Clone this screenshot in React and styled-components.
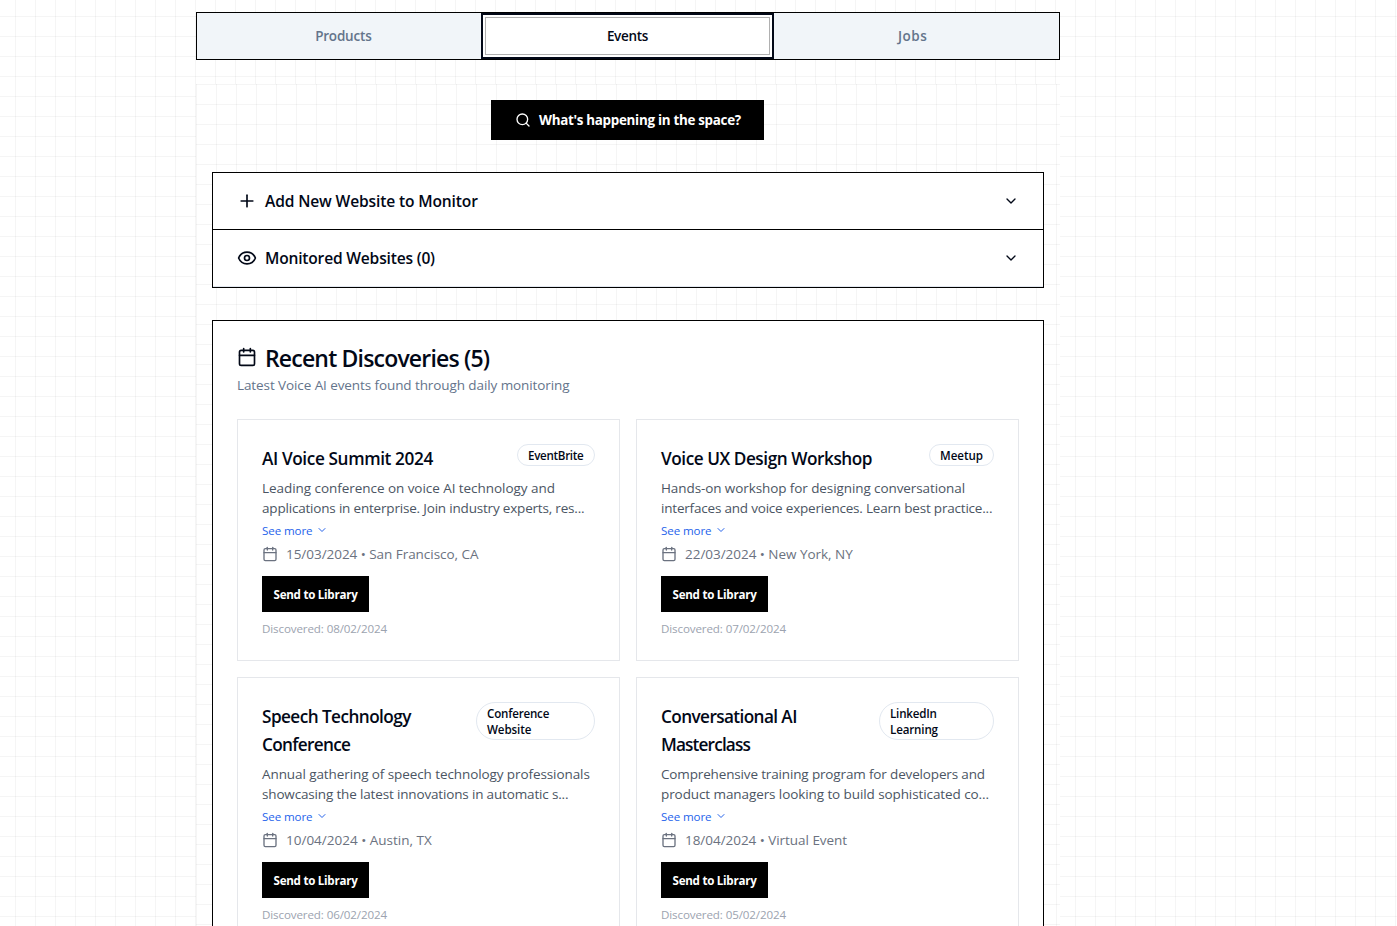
import React from 'react';
import styled, { createGlobalStyle, css } from 'styled-components';
import { Search, Plus, Eye, Calendar, ChevronDown } from 'lucide-react';

const gridLines = css`
  background-color: #fff;
  background-image:
    linear-gradient(rgba(0, 0, 0, 0.04) 1px, transparent 1px),
    linear-gradient(90deg, rgba(0, 0, 0, 0.04) 1px, transparent 1px);
  background-size: 20px 20px;
`;

const GlobalStyle = createGlobalStyle`
  *, *::before, *::after { box-sizing: border-box; }
  body {
    margin: 0;
    height: 926px;
    overflow: hidden;
    color: #020817;
    font-family: "Open Sans", "Noto Sans", sans-serif;
  }
  button { font-family: inherit; color: inherit; background: none; border: 0; padding: 0; margin: 0; }
  h2, h3, p { margin: 0; }
  svg { flex: none; display: block; }
`;

const Page = styled.div`
  ${gridLines}
  background-position: -5px -4px;
  height: 926px;
  overflow: hidden;
  padding: 12px 0 0 196px;
`;

const Main = styled.main`
  width: 864px;
`;

const TabList = styled.div`
  display: grid;
  grid-template-columns: repeat(3, 1fr);
  height: 48px;
  padding: 4px;
  border: 1px solid #000;
  background: #f1f5f9;
`;

const Tab = styled.button`
  height: 38px;
  border: 1px solid transparent;
  font-size: 13.5px;
  font-weight: 600;
  line-height: 20px;
  color: #64748b;
  ${(p) =>
    p.$active &&
    css`
      margin-left: -1px;
      color: #020817;
      background: #fff;
      border-color: #b0b0b0;
      box-shadow: 0 0 0 2px #fff, 0 0 0 4px #020817;
    `}
`;

const Spaced = styled.span`
  letter-spacing: ${(p) => p.$ls || 0}px;
  padding-top: ${(p) => p.$pt || 0}px;
  white-space: nowrap;
`;

const Panel = styled.section`
  ${gridLines}
  margin-top: 24px;
  padding: 16px 16px 0;
  height: 900px;
`;

const SearchButton = styled.button`
  display: flex;
  align-items: center;
  gap: 8px;
  width: 273px;
  height: 40px;
  margin: 0 0 32px 279px;
  padding: 0 24px;
  background: #000;
  color: #fff;
  font-size: 13.4px;
  font-weight: 700;
  line-height: 20px;
`;

const Accordion = styled.div`
  border: 1px solid #000;
  background: #fff;
  margin-bottom: 32px;
`;

const AccordionRow = styled.button`
  display: flex;
  align-items: center;
  gap: 8px;
  width: 100%;
  height: 57px;
  padding: 0 24px;
  border-bottom: 1px solid ${(p) => (p.$last ? '#e2e8f0' : '#000')};
  font-size: 15.6px;
  font-weight: 600;
  line-height: 24px;
  text-align: left;

  & > svg:last-child { margin-left: auto; }
`;

const Discoveries = styled.section`
  border: 1px solid #000;
  background: #fff;
  padding: 24px 24px 0;
  height: 800px;
`;

const Heading = styled.h2`
  display: flex;
  align-items: center;
  gap: 8px;
  height: 24px;
  font-size: 23px;
  font-weight: 600;
  line-height: 24px;
`;

const Subtitle = styled.p`
  margin: 6px 0 24px;
  font-size: 13.5px;
  line-height: 20px;
  color: #64748b;
`;

const CardGrid = styled.div`
  display: grid;
  grid-template-columns: 1fr 1fr;
  gap: 16px;
`;

const Card = styled.article`
  display: flex;
  flex-direction: column;
  align-items: flex-start;
  padding: 24px 24px 23px;
  border: 1px solid #e5e7eb;
  background: #fff;
`;

const CardHeader = styled.header`
  display: flex;
  justify-content: space-between;
  align-items: flex-start;
  width: 100%;
  margin-bottom: 5px;
`;

const CardTitle = styled.h3`
  display: flex;
  flex-direction: column;
  padding-top: 1px;
  font-size: 17.2px;
  font-weight: 600;
  line-height: 28px;
`;

const Badge = styled.span`
  display: flex;
  flex-direction: column;
  width: ${(p) => p.$width}px;
  padding: 3px 10px 1px;
  border: 1px solid #e2e8f0;
  border-radius: 999px;
  font-size: 11.6px;
  font-weight: 600;
  line-height: 16px;
`;

const Description = styled.p`
  display: flex;
  flex-direction: column;
  font-size: 13.5px;
  line-height: 20px;
  color: #4b5563;
`;

const SeeMore = styled.button`
  display: flex;
  align-items: center;
  gap: 4px;
  height: 16px;
  margin-top: 4px;
  font-size: 11.6px;
  line-height: 16px;
  color: #2563eb;
`;

const Meta = styled.div`
  display: flex;
  align-items: center;
  gap: 8px;
  margin-top: 6px;
  font-size: 13.5px;
  line-height: 20px;
  color: #6b7280;
`;

const SendButton = styled.button`
  width: 107px;
  height: 36px;
  margin-top: 12px;
  padding-top: 2px;
  background: #000;
  color: #fff;
  font-size: 11.6px;
  font-weight: 700;
  line-height: 16px;
`;

const Discovered = styled.p`
  margin-top: 9px;
  font-size: 11.6px;
  line-height: 16px;
  color: #9ca3af;
`;

const events = [
  {
    title: [['AI Voice Summit 2024', -0.38]],
    badge: [['EventBrite', -0.3]],
    badgeWidth: 78,
    text: [
      ['Leading conference on voice AI technology and', -0.05],
      ['applications in enterprise. Join industry experts, res...', -0.19],
    ],
    meta: ['15/03/2024 • San Francisco, CA', -0.04],
    found: '08/02/2024',
  },
  {
    title: [['Voice UX Design Workshop', -0.45]],
    badge: [['Meetup', -0.05]],
    badgeWidth: 65,
    text: [
      ['Hands-on workshop for designing conversational', -0.09],
      ['interfaces and voice experiences. Learn best practice...', -0.2],
    ],
    meta: ['22/03/2024 • New York, NY', -0.03],
    found: '07/02/2024',
  },
  {
    title: [['Speech Technology', -0.56], ['Conference', -0.68]],
    badge: [['Conference', -0.2], ['Website', -0.1]],
    badgeWidth: 119,
    text: [
      ['Annual gathering of speech technology professionals', -0.09],
      ['showcasing the latest innovations in automatic s...', -0.16],
    ],
    meta: ['10/04/2024 • Austin, TX', 0],
    found: '06/02/2024',
  },
  {
    title: [['Conversational AI', -0.6], ['Masterclass', -0.85]],
    badge: [['LinkedIn', -0.2], ['Learning', -0.15]],
    badgeWidth: 115,
    text: [
      ['Comprehensive training program for developers and', -0.15],
      ['product managers looking to build sophisticated co...', -0.09],
    ],
    meta: ['18/04/2024 • Virtual Event', -0.04],
    found: '05/02/2024',
  },
];

const Lines = ({ items }) =>
  items.map(([text, ls]) => (
    <Spaced key={text} $ls={ls}>
      {text}
    </Spaced>
  ));

const EventCard = ({ event }) => (
  <Card>
    <CardHeader>
      <CardTitle>
        <Lines items={event.title} />
      </CardTitle>
      <Badge $width={event.badgeWidth}>
        <Lines items={event.badge} />
      </Badge>
    </CardHeader>
    <Description>
      <Lines items={event.text} />
    </Description>
    <SeeMore>
      <Spaced $ls={-0.12} $pt={2}>See more</Spaced>
      <ChevronDown size={12} />
    </SeeMore>
    <Meta>
      <Calendar size={16} />
      <Lines items={[event.meta]} />
    </Meta>
    <SendButton>
      <Spaced $ls={-0.27}>Send to Library</Spaced>
    </SendButton>
    <Discovered>
      <Spaced $ls={-0.12}>Discovered: {event.found}</Spaced>
    </Discovered>
  </Card>
);

export default function App() {
  return (
    <>
      <GlobalStyle />
      <Page>
        <Main>
          <TabList role="tablist">
            <Tab role="tab">
              <Spaced $ls={-0.2}>Products</Spaced>
            </Tab>
            <Tab role="tab" $active>
              <Spaced $ls={-0.3}>Events</Spaced>
            </Tab>
            <Tab role="tab">
              <Spaced $ls={0.45}>Jobs</Spaced>
            </Tab>
          </TabList>
          <Panel>
            <SearchButton>
              <Search size={16} />
              <Spaced $ls={-0.29}>What's happening in the space?</Spaced>
            </SearchButton>
            <Accordion>
              <AccordionRow>
                <Plus size={20} />
                <Spaced $ls={-0.15}>Add New Website to Monitor</Spaced>
                <ChevronDown size={16} />
              </AccordionRow>
              <AccordionRow $last>
                <Eye size={20} />
                <Spaced $ls={-0.2}>Monitored Websites (0)</Spaced>
                <ChevronDown size={16} />
              </AccordionRow>
            </Accordion>
            <Discoveries>
              <Heading>
                <Calendar size={20} />
                <Spaced $ls={-0.82} $pt={2}>Recent Discoveries (5)</Spaced>
              </Heading>
              <Subtitle>
                <Spaced $ls={-0.09}>Latest Voice AI events found through daily monitoring</Spaced>
              </Subtitle>
              <CardGrid>
                {events.map((event) => (
                  <EventCard key={event.found} event={event} />
                ))}
              </CardGrid>
            </Discoveries>
          </Panel>
        </Main>
      </Page>
    </>
  );
}
